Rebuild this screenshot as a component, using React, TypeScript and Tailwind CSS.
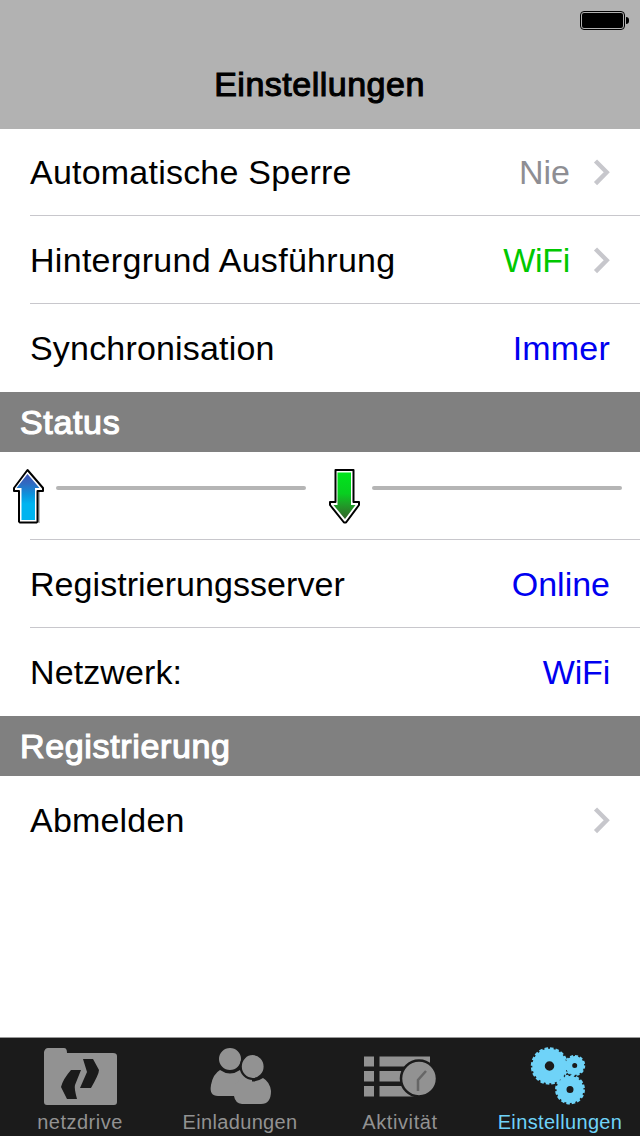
import type { ReactNode } from "react";

const Chevron = () => (
  <svg width="18" height="28" viewBox="0 0 18 28" className="ml-[23px] shrink-0" fill="none">
    <path d="M2.500 3 L13.700 14.300 L2.500 25.600" stroke="#c7c7cc" strokeWidth="4.400" />
  </svg>
);

type RowProps = {
  label: string;
  labelClass?: string;
  value?: string;
  valueClass?: string;
  chevron?: boolean;
  last?: boolean;
};

const Row = ({ label, labelClass = "", value, valueClass = "", chevron, last }: RowProps) => (
  <div
    className={`ml-[30px] flex h-[88px] items-center border-b pt-px ${
      last ? "border-transparent" : "border-[#c8c7cc]"
    } ${chevron ? "pr-[29px]" : "pr-[30px]"}`}
  >
    <span className={`grow whitespace-nowrap ${labelClass}`}>{label}</span>
    {value && <span className={`whitespace-nowrap ${valueClass}`}>{value}</span>}
    {chevron && <Chevron />}
  </div>
);

const SectionHeader = ({ children }: { children: ReactNode }) => (
  <h2 className="flex h-[60px] items-center bg-[#808080] pl-5 tracking-[0.65px] text-white [-webkit-text-stroke:1.2px_currentColor]">
    {children}
  </h2>
);

const UploadArrow = () => (
  <svg width="34" height="58" viewBox="0 0 34 58">
    <defs>
      <linearGradient id="up" x1="0" y1="0" x2="0" y2="1">
        <stop offset="0" stopColor="#3b55b5" />
        <stop offset="0.2" stopColor="#3169c0" />
        <stop offset="0.45" stopColor="#0c93dd" />
        <stop offset="0.65" stopColor="#00b4f0" />
        <stop offset="1" stopColor="#00b4f0" />
      </linearGradient>
    </defs>
    <path d="M28 24 H26 V55 H28 Z" fill="#bbb" />
    <path
      d="M15.500 2 L31 20 V23 H25.500 V53.500 L24.500 54.500 H8 L7 53.500 V23 H2 V20 Z"
      fill="#fff"
      stroke="#000"
      strokeWidth="2"
      strokeLinejoin="round"
    />
    <path d="M15.500 6 L27.500 20 H23 V52 H9.500 V20 H4.500 Z" fill="url(#up)" />
  </svg>
);

const DownloadArrow = () => (
  <svg width="34" height="58" viewBox="0 0 34 58">
    <defs>
      <linearGradient id="down" x1="0" y1="0" x2="0" y2="1">
        <stop offset="0" stopColor="#00e51c" />
        <stop offset="0.45" stopColor="#08cf20" />
        <stop offset="0.7" stopColor="#209c28" />
        <stop offset="1" stopColor="#35612a" />
      </linearGradient>
    </defs>
    <path
      d="M7.500 2 H25.500 V34 H31 V37 L18 54.500 H16 L2 37 V34 H7.500 Z"
      fill="#fff"
      stroke="#000"
      strokeWidth="2"
      strokeLinejoin="round"
    />
    <path d="M9.500 4.500 H23 V37 H27.500 L17 51 L5.500 37 H9.500 Z" fill="url(#down)" />
  </svg>
);

const FolderIcon = () => (
  <svg width="80" height="60" viewBox="0 0 80 60">
    <path d="M4 5 Q5 1 8 1 H24 Q27 1 27 6 H73 Q77 6 77 9 V55 Q77 58 74 58 H7 Q4 58 4 55 Z" fill="#929292" />
    <path d="M43 12 H53 L59 23 Q59 27 51 41 H40 L47 25 Z" fill="#1b1b1b" />
    <path d="M31 23 H41 L35 38 Q34 41 37 52 H27 L21 40 Q23 32 31 23 Z" fill="#1b1b1b" />
  </svg>
);

const PeopleIcon = () => (
  <svg width="80" height="60" viewBox="0 0 80 60" fill="#929292">
    <path d="M20 23 Q30 30 40 23 L52 32 V49 H18 Q9 49 11 38 Q13 27 20 23 Z" />
    <path d="M42 31 Q53 38 63 31 Q70 35 71 44 Q71 57 61 57 H42 Q35 56 34 49 V38 Z" />
    <circle cx="30" cy="12" r="12" stroke="#1b1b1b" strokeWidth="2" />
    <ellipse cx="52.700" cy="19.500" rx="12" ry="12.500" stroke="#1b1b1b" strokeWidth="2.200" />
  </svg>
);

const ActivityIcon = () => (
  <svg width="80" height="60" viewBox="0 0 80 60" fill="#929292">
    <path d="M4 9.500 H14 V19.500 H4 Z M19.500 9.500 H70 V19.500 H19.500 Z" />
    <path d="M4 24 H14 V34.500 H4 Z M19.500 24 H52 V34.500 H19.500 Z" />
    <path d="M4 39 H14 V49.500 H4 Z M19.500 39 H54 V49.500 H19.500 Z" />
    <circle cx="59" cy="31.500" r="18" stroke="#1b1b1b" strokeWidth="2.500" />
    <path d="M58 44 V33 L66 24" fill="none" stroke="#666" strokeWidth="2.500" />
  </svg>
);

const GearsIcon = () => (
  <svg width="80" height="60" viewBox="0 0 80 60" fill="none" stroke="#6fd3f8">
    <circle cx="29.500" cy="19" r="11" strokeWidth="12.500" />
    <circle cx="29.500" cy="19" r="17.200" strokeWidth="3" strokeDasharray="3.500 1.904" />
    <circle cx="54.700" cy="18.500" r="6" strokeWidth="7" />
    <circle cx="54.700" cy="18.500" r="9.300" strokeWidth="2.500" strokeDasharray="3 1.869" />
    <circle cx="50" cy="42.500" r="8.500" strokeWidth="10" />
    <circle cx="50" cy="42.500" r="13.700" strokeWidth="2.500" strokeDasharray="3.500 1.880" />
  </svg>
);

const tabs = [
  { label: "netzdrive", icon: <FolderIcon />, spacing: "tracking-[0.5px]" },
  { label: "Einladungen", icon: <PeopleIcon />, spacing: "tracking-[0.35px]" },
  { label: "Aktivität", icon: <ActivityIcon />, spacing: "tracking-[0.6px]" },
  { label: "Einstellungen", icon: <GearsIcon />, spacing: "tracking-[0.35px]", active: true },
];

export default function App() {
  return (
    <div className="flex h-[1136px] w-[640px] flex-col overflow-hidden bg-white font-['Liberation_Sans',Arial,sans-serif] text-[34px] leading-[40px] text-black">
      <header className="flex h-[129px] shrink-0 flex-col bg-[#b2b2b2]">
        <div className="flex h-10 items-center justify-end pr-[11px]">
          <div className="flex h-[19px] w-[45px] rounded-[4px] border border-black p-px">
            <div className="grow rounded-[2px] bg-black" />
          </div>
          <div className="ml-px h-[7px] w-[3px] rounded-r-full bg-black" />
        </div>
        <h1 className="pt-6 pr-px text-center tracking-[0.5px] [-webkit-text-stroke:1.1px_currentColor]">
          Einstellungen
        </h1>
      </header>

      <main className="-mt-px grow">
        <Row
          label="Automatische Sperre"
          labelClass="tracking-[0.22px]"
          value="Nie"
          valueClass="text-[#8e8e93]"
          chevron
        />
        <Row
          label="Hintergrund Ausführung"
          labelClass="tracking-[0.29px]"
          value="WiFi"
          valueClass="tracking-[-0.3px] text-[#00c800]"
          chevron
        />
        <Row
          label="Synchronisation"
          labelClass="tracking-[0.18px]"
          value="Immer"
          valueClass="tracking-[0.2px] text-[#0000f0]"
          last
        />

        <SectionHeader>Status</SectionHeader>
        <div className="flex h-[88px] flex-col">
          <div className="flex grow items-start pt-4 pl-3">
            <UploadArrow />
            <div className="mt-[18px] ml-[10px] h-1 w-[250px] rounded-full bg-[#b5b5b5]" />
            <div className="ml-[22px]">
              <DownloadArrow />
            </div>
            <div className="mt-[18px] ml-[10px] h-1 w-[250px] rounded-full bg-[#b5b5b5]" />
          </div>
          <div className="ml-[30px] h-px bg-[#c8c7cc]" />
        </div>
        <Row
          label="Registrierungsserver"
          labelClass="tracking-[0.06px]"
          value="Online"
          valueClass="text-[#0000f0]"
        />
        <Row
          label="Netzwerk:"
          labelClass="tracking-[0.1px]"
          value="WiFi"
          valueClass="tracking-[-0.2px] text-[#0000f0]"
          last
        />

        <SectionHeader>Registrierung</SectionHeader>
        <Row label="Abmelden" labelClass="tracking-[0.2px]" chevron last />
      </main>

      <nav className="grid h-[99px] shrink-0 grid-cols-4 border-t border-[#999] bg-[#1b1b1b]">
        {tabs.map((tab) => (
          <div
            key={tab.label}
            className={`flex flex-col items-center pt-[9px] text-[20px] leading-[24px] ${
              tab.active ? "text-[#6fd3f8]" : "text-[#929292]"
            }`}
          >
            {tab.icon}
            <span className={`mt-[3px] whitespace-nowrap ${tab.spacing}`}>{tab.label}</span>
          </div>
        ))}
      </nav>
    </div>
  );
}
